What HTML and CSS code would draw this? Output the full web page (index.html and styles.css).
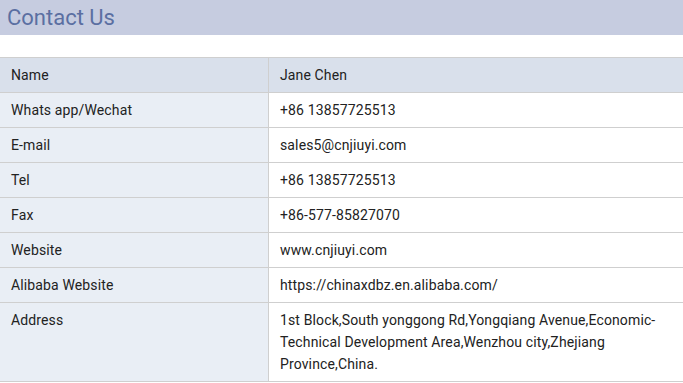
FILE: index.html
```html
<!DOCTYPE html>
<html>
<head>
<meta charset="utf-8">
<link rel="stylesheet" href="styles.css">
</head>
<body>
<div class="title-bar"><h2 class="title">Contact Us</h2></div>
<table class="contact">
  <tr class="head"><td class="label">Name</td><td class="value">Jane Chen</td></tr>
  <tr><td class="label">Whats app/Wechat</td><td class="value">+86 13857725513</td></tr>
  <tr><td class="label">E-mail</td><td class="value">sales5@cnjiuyi.com</td></tr>
  <tr><td class="label">Tel</td><td class="value">+86 13857725513</td></tr>
  <tr><td class="label">Fax</td><td class="value">+86-577-85827070</td></tr>
  <tr><td class="label">Website</td><td class="value">www.cnjiuyi.com</td></tr>
  <tr><td class="label">Alibaba Website</td><td class="value">https://chinaxdbz.en.alibaba.com/</td></tr>
  <tr><td class="label">Address</td><td class="value">1st Block,South yonggong Rd,Yongqiang Avenue,Economic-Technical Development Area,Wenzhou city,Zhejiang Province,China.</td></tr>
</table>
</body>
</html>
```
FILE: styles.css
```css
html, body {
  margin: 0;
  padding: 0;
  background: #fff;
  font-family: Roboto, "Liberation Sans", sans-serif;
}
.title-bar {
  background: #c6cce0;
  height: 35px;
  display: flex;
  align-items: center;
  padding-left: 7px;
  margin-bottom: 22px;
}
.title {
  margin: 0;
  font-weight: 400;
  font-size: 22px;
  color: #5b6fa2;
}
.contact {
  width: 100%;
  border-collapse: collapse;
  font-size: 14px;
  letter-spacing: 0.13px;
  color: #222;
}
.contact td {
  border-top: 1px solid #cfcfcf;
  border-bottom: 1px solid #cfcfcf;
  padding: 6px 11px;
  line-height: 22px;
  vertical-align: top;
}
.contact td.label {
  width: 246px;
  background: #e9eef5;
  border-right: 1px solid #cfcfcf;
}
.contact tr.head td {
  background: #d9e0eb;
}
```
